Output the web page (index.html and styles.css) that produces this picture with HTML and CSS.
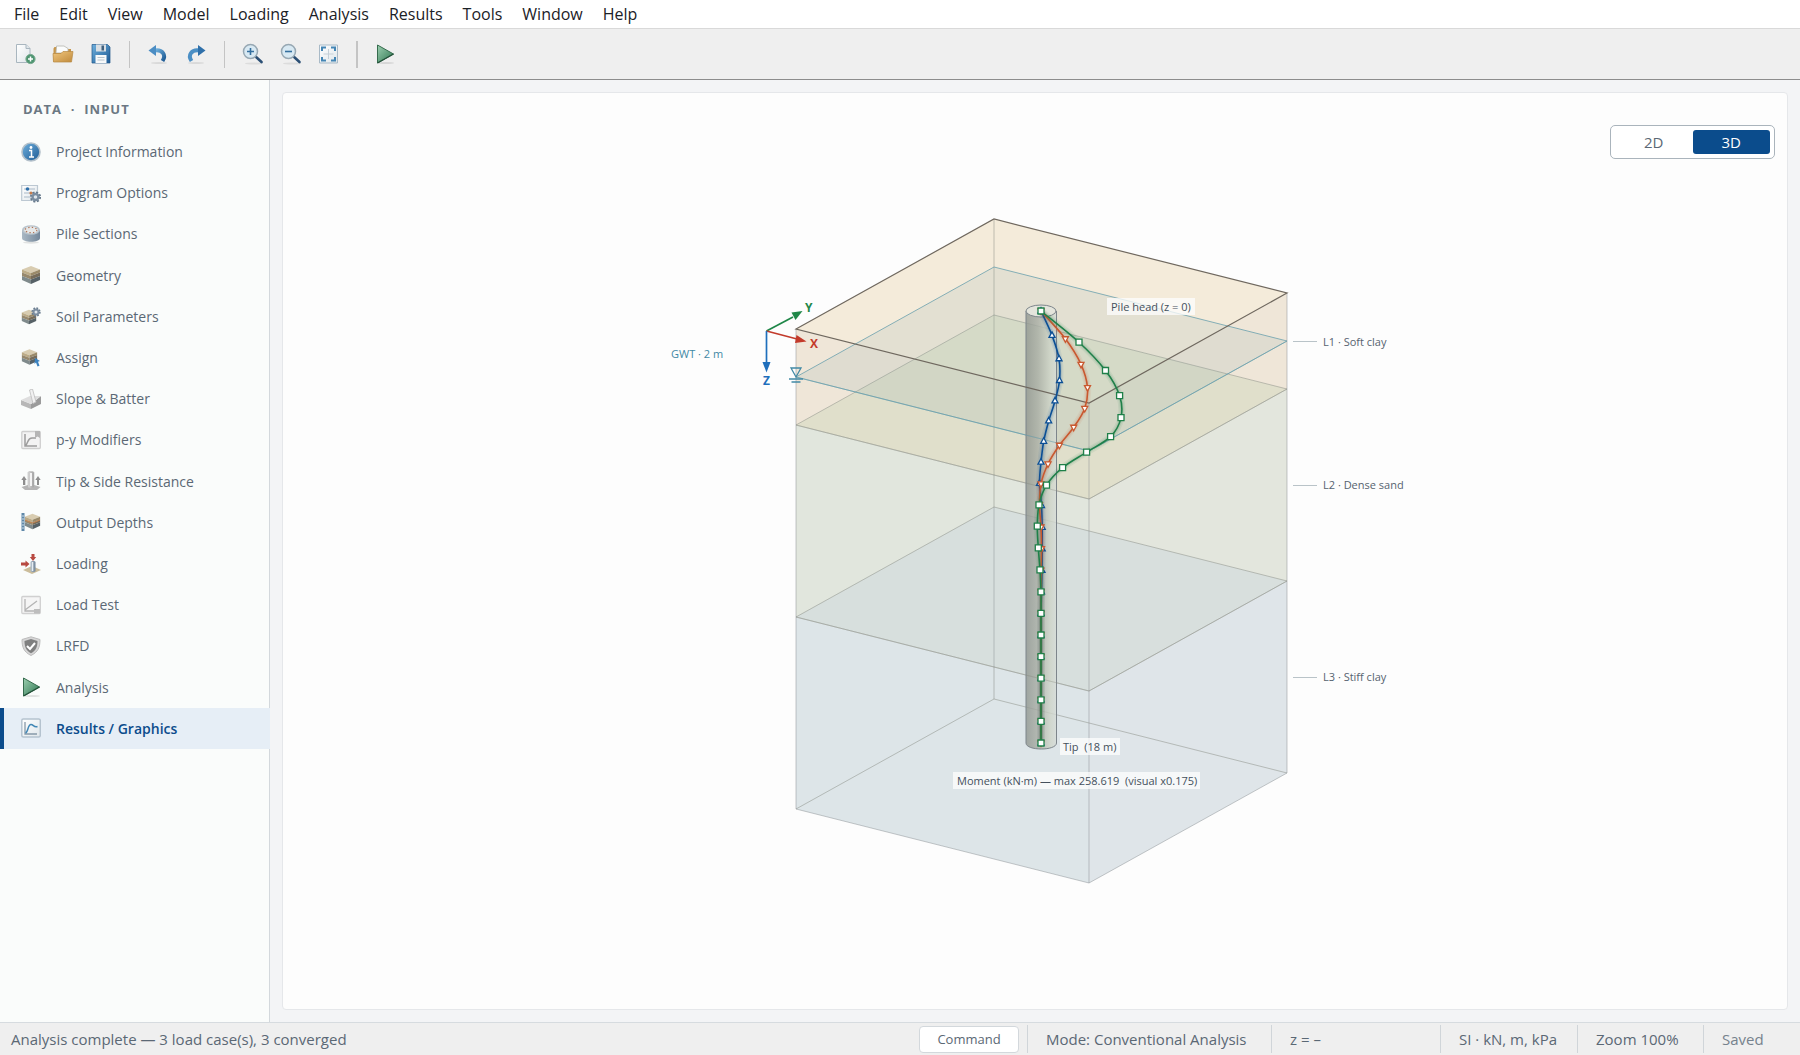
FILE: index.html
```html
<!DOCTYPE html>
<html lang="en">
<head>
<meta charset="utf-8">
<title>Pile Analysis</title>
<link rel="stylesheet" href="styles.css">
</head>
<body>
<svg class="defs" aria-hidden="true">
  <defs>
    <linearGradient id="blue" x1="0" y1="0" x2="1" y2="1"><stop offset="0" stop-color="#6fb0dd"/><stop offset="1" stop-color="#1d5a94"/></linearGradient>
    <linearGradient id="green" x1="0" y1="0" x2="1" y2="1"><stop offset="0" stop-color="#9ccfb0"/><stop offset="1" stop-color="#2d7550"/></linearGradient>
    <linearGradient id="gold" x1="0" y1="0" x2="1" y2="1"><stop offset="0" stop-color="#f0c67e"/><stop offset="1" stop-color="#c08a3c"/></linearGradient>
    <linearGradient id="paper" x1="0" y1="0" x2="1" y2="1"><stop offset="0" stop-color="#ffffff"/><stop offset="1" stop-color="#dfe6ea"/></linearGradient>
    <linearGradient id="steel" x1="0" y1="0" x2="1" y2="0"><stop offset="0" stop-color="#a9b8c4"/><stop offset="1" stop-color="#74879a"/></linearGradient>
    <linearGradient id="gray" x1="0" y1="0" x2="1" y2="0"><stop offset="0" stop-color="#dcdcdc"/><stop offset="1" stop-color="#9e9e9e"/></linearGradient>
    <symbol id="cube" viewBox="0 0 20 20">
      <path d="M10 1 19 4.500 10 8 1 4.500Z" fill="#d8ccb0"/>
      <path d="M1 4.500 10 8v3L1 7.500Z" fill="#bcab86"/><path d="M19 4.500 10 8v3l9-3.500Z" fill="#9a8a69"/>
      <path d="M1 7.500 10 11v3.500L1 11Z" fill="#97886c"/><path d="M19 7.500 10 11v3.500L19 11Z" fill="#776c59"/>
      <path d="M1 11l9 3.500V19L1 15Z" fill="#7f8a8b"/><path d="M19 11l-9 3.500V19l9-4Z" fill="#566166"/>
    </symbol>
    <symbol id="gear" viewBox="0 0 12 12">
      <circle cx="6" cy="6" r="4.600" fill="none" stroke="#66798b" stroke-width="2" stroke-dasharray="2 1.610"/>
      <circle cx="6" cy="6" r="3" fill="#dfe6ec" stroke="#7b8da0" stroke-width="2.400"/>
    </symbol>
    <symbol id="play" viewBox="0 0 20 20">
      <ellipse cx="11" cy="19" rx="8" ry="1" fill="#000" opacity=".1"/>
      <path d="M2.500 1 18.500 10 2.500 19Z" fill="url(#green)" stroke="#356b4d" stroke-width="1" stroke-linejoin="round"/>
      <path d="M2.500 19 18.500 10" stroke="#24523a" stroke-width="1.300"/>
    </symbol>
    <symbol id="lens" viewBox="0 0 22 22">
      <ellipse cx="12" cy="20.500" rx="9" ry="1" fill="#000" opacity=".08"/>
      <path d="m13 13 6.500 6" stroke="#2b4f75" stroke-width="2.600" stroke-linecap="round"/>
      <circle cx="8.500" cy="8.500" r="7" fill="#d8e9f3" stroke="#97a8b3" stroke-width="1.500"/>
    </symbol>
  </defs>
</svg>

<nav class="menubar" aria-label="Main menu">
  <button>File</button><button>Edit</button><button>View</button><button>Model</button><button>Loading</button><button>Analysis</button><button>Results</button><button>Tools</button><button>Window</button><button>Help</button>
</nav>

<div class="toolbar" role="toolbar" aria-label="Tools">
  <button aria-label="New"><svg viewBox="0 0 22 22"><path d="M2.500 1.500h9.500l4 4V19.500H2.500Z" fill="url(#paper)" stroke="#a9b6bf"/><path d="M12 1.500v4h4" fill="#dfe6ea" stroke="#a9b6bf"/><circle cx="16.500" cy="16" r="4.600" fill="#4d9470" stroke="#75a98d"/><path d="M16.500 13.500v5M14 16h5" stroke="#fff" stroke-width="1.500"/></svg></button>
  <button aria-label="Open"><svg viewBox="0 0 22 22"><path d="M1.500 19V5.500L2.500 4h5l1.500 2h10v4" fill="#c6954a"/><path d="m4 10 .500-7H12l4 2.500V10Z" fill="#fbfcfc" stroke="#b6b6b0" stroke-width=".8"/><path d="M1 10.500h8l2-2h10L19.500 19h-18Z" fill="url(#gold)" stroke="#b88a44" stroke-width=".7"/></svg></button>
  <button aria-label="Save"><svg viewBox="0 0 22 22"><path d="M2 1.500h15.500L20 4v16H2Z" fill="url(#blue)" stroke="#1f568b" stroke-width=".7"/><path d="M6 1.500h10v7H6Z" fill="#d8dee3"/><path d="M11.500 2.500H14v5h-2.500Z" fill="#3f5f7c"/><path d="M5.500 12h11v8h-11Z" fill="#f7f9fa"/><path d="M7.500 14.500h7M7.500 17h7" stroke="#b8c4cd"/></svg></button>
  <span class="rule"></span>
  <button aria-label="Undo"><svg viewBox="0 0 22 22"><ellipse cx="12" cy="20" rx="8" ry="1" fill="#000" opacity=".09"/><path d="M8 7.500C15.500 6.500 19.500 12 15.500 18" fill="none" stroke="url(#blue)" stroke-width="4"/><path d="M1.500 7.500 9 2v11Z" fill="#4b8dc4"/></svg></button>
  <button aria-label="Redo"><svg viewBox="0 0 22 22"><ellipse cx="11" cy="20" rx="8" ry="1" fill="#000" opacity=".09"/><path d="M14 7.500C6.500 6.500 2.500 12 6.500 18" fill="none" stroke="#4b8fc5" stroke-width="4"/><path d="M20.500 7.500 13 2v11Z" fill="#2f70aa"/></svg></button>
  <span class="rule"></span>
  <button aria-label="Zoom in"><svg viewBox="0 0 22 22"><use href="#lens"/><path d="M8.500 5v7M5 8.500h7" stroke="#346f9e" stroke-width="1.600"/></svg></button>
  <button aria-label="Zoom out"><svg viewBox="0 0 22 22"><use href="#lens"/><path d="M5 8.500h7" stroke="#346f9e" stroke-width="1.600"/></svg></button>
  <button aria-label="Zoom to fit"><svg viewBox="0 0 22 22"><path d="M1.500 2h18v18h-18Z" fill="url(#paper)" stroke="#a9bac7"/><path d="M10.500 6v10M5.500 11h10" stroke="#c5d0d8"/><path d="M4 8V4.500h4M13 4.500h4V8M17 14v3.500h-4M8 17.500H4V14" fill="none" stroke="#4486b5" stroke-width="2"/></svg></button>
  <span class="rule rule-bold"></span>
  <button aria-label="Run analysis"><svg viewBox="-1 -1 22 22"><use href="#play" width="20" height="20"/></svg></button>
</div>

<div class="workspace">
  <aside class="sidebar">
    <h2>DATA &nbsp;·&nbsp; INPUT</h2>
    <nav class="steps" aria-label="Data input">
      <a href="#info"><svg viewBox="0 0 20 20"><circle cx="10" cy="10" r="9" fill="url(#blue)" stroke="#b3c0ca" stroke-width="1.600"/><circle cx="10" cy="5.500" r="1.400" fill="#fff"/><path d="M8 8.500h2.500V15M8 15h5" fill="none" stroke="#fff" stroke-width="1.500"/></svg>Project Information</a>
      <a href="#options"><svg viewBox="0 0 20 20"><path d="M.7 2.500h15.800v15H.7Z" fill="url(#paper)" stroke="#bcc8d2" stroke-width="1.200"/><path d="M3 6h11M3 10h11M3 14h7" stroke="#a9bac7" stroke-width="1.200"/><circle cx="6.500" cy="6" r="1.800" fill="#2f70aa"/><circle cx="10" cy="10" r="1.600" fill="#c97c4a"/><use href="#gear" x="8.500" y="8" width="12" height="12"/></svg>Program Options</a>
      <a href="#sections"><svg viewBox="0 0 20 20"><ellipse cx="10" cy="18.500" rx="8" ry="1.200" fill="#000" opacity=".1"/><path d="M1 6v8c0 5 18 5 18 0V6Z" fill="url(#steel)"/><ellipse cx="10" cy="6" rx="9" ry="4.800" fill="#b9c4cc"/><ellipse cx="10" cy="6" rx="7" ry="3.500" fill="#e6e8e8"/><ellipse cx="10" cy="6" rx="5.800" ry="2.700" fill="none" stroke="#b0755a" stroke-width="1.200" stroke-dasharray="1.300 2.200"/></svg>Pile Sections</a>
      <a href="#geometry"><svg viewBox="0 0 20 20"><use href="#cube"/></svg>Geometry</a>
      <a href="#soil"><svg viewBox="0 0 20 20"><use href="#cube" x="0" y="3" width="16" height="16"/><use href="#gear" x="10" y="1" width="10" height="10"/></svg>Soil Parameters</a>
      <a href="#assign"><svg viewBox="0 0 20 20"><use href="#cube" x="0" y="0" width="17" height="18"/><path d="m14 10 5 3-2 .7 1.500 4-2 .8-1.500-4-1.500 1.500Z" fill="#3b82bf"/></svg>Assign</a>
      <a href="#slope"><svg viewBox="0 0 20 20"><path d="M0 11 10 15v5L0 16Z" fill="#b7b7b7"/><path d="m20 7-10 8v5l10-5Z" fill="#9b9b9b"/><path d="m0 11 9-4 11 0-10 8Z" fill="#dedede"/><path d="m8.500 1 3-1 3.500 13-3 1.500Z" fill="#f1f1f1" stroke="#bdbdbd" stroke-width=".8"/></svg>Slope &amp; Batter</a>
      <a href="#py"><svg viewBox="0 0 20 20"><rect x=".8" y="1.500" width="18.500" height="17" rx="1" fill="#f3f3f3" stroke="#cfcfcf" stroke-width="1.300"/><path d="M4 4v12h12M4 16C8 13 6 8 11 8h4" fill="none" stroke="#9d9d9d" stroke-width="1.500"/><path d="M14 1h5v7l-2.500-1.500L14 8Z" fill="#b5b5b5"/></svg>p-y Modifiers</a>
      <a href="#tip"><svg viewBox="0 0 20 20"><path d="M.5 16 10 13l9.500 3-3.500 3H4Z" fill="#b5b5b5"/><path d="M7 1.500c0-1.500 6-1.500 6 0V16c0 1.500-6 1.500-6 0Z" fill="url(#gray)" stroke="#bbb" stroke-width=".6"/><path d="M10 2v13" stroke="#f4f4f4" stroke-width="2"/><path d="M2 14V9H.3L3 5l2.700 4H4.300v5M16 14V9h-1.700L17 5l2.700 4H18v5" fill="#8e8e8e"/></svg>Tip &amp; Side Resistance</a>
      <a href="#depths"><svg viewBox="0 0 20 20"><use href="#cube" x="3" y="0" width="17" height="19"/><path d="m4 8 7.500 3L19 8" fill="none" stroke="#c98752"/><path d="M2 1v18" stroke="#5f88a8" stroke-width="3"/><path d="M1 4h2M1 7h2M1 10h2M1 13h2M1 16h2" stroke="#cfdde7"/></svg>Output Depths</a>
      <a href="#loading"><svg viewBox="0 0 20 20"><path d="m2 16 9-4 9 4-9 4Z" fill="#cbbd9b"/><path d="M9.500 8c0-1.500 5-1.500 5 0v9c0 1.500-5 1.500-5 0Z" fill="url(#steel)"/><path d="M11.500 8v9" stroke="#e7edf2" stroke-width="1.500"/><path d="M10.500 0h3v3h1.700L12 7 8.800 3h1.700ZM0 8.500h4.500V6.500L8.500 10l-4 3.500v-2H0Z" fill="#b84a42"/></svg>Loading</a>
      <a href="#loadtest"><svg viewBox="0 0 20 20"><rect x=".8" y="1.500" width="18.500" height="17" rx="1" fill="#f5f5f5" stroke="#d0d0d0" stroke-width="1.300"/><path d="M4 4v12h10M4 15 16 6" fill="none" stroke="#b4b4b4" stroke-width="1.300"/><rect x="13" y="14" width="6" height="4.500" fill="#bdbdbd"/></svg>Load Test</a>
      <a href="#lrfd"><svg viewBox="0 0 20 20"><path d="M10 .8 19 3.500c0 8-2 12.500-9 16-7-3.500-9-8-9-16Z" fill="#d6d6d6" stroke="#bcbcbc"/><path d="m10 3 6.500 2c0 6-1.500 9.500-6.500 12.200C5 14.500 3.500 11 3.500 5Z" fill="#7f8080"/><path d="m6 10 3 3 5-6" fill="none" stroke="#fff" stroke-width="2"/></svg>LRFD</a>
      <a href="#analysis"><svg viewBox="0 0 20 20"><use href="#play"/></svg>Analysis</a>
      <a href="#results" class="active" aria-current="page"><svg viewBox="0 0 20 20"><rect x=".8" y="1" width="18.500" height="18" rx="1.500" fill="url(#paper)" stroke="#b5c3cf" stroke-width="1.500"/><path d="M4 4v12h12" fill="none" stroke="#8799a8" stroke-width="1.300"/><path d="M4.500 15C7.500 14 6.500 6.500 10 6.500c2.500 0 3 3.500 6.500 2" fill="none" stroke="#4187b5" stroke-width="1.500"/></svg>Results / Graphics</a>
    </nav>
  </aside>

  <main class="canvas">
    <div class="viewswitch" role="group" aria-label="View mode">
      <button aria-pressed="false">2D</button><button aria-pressed="true" class="on">3D</button>
    </div>
    <svg class="scene" viewBox="283 93 1504 916" role="img" aria-label="Soil block and pile, 3D moment diagram">
      <defs>
        <linearGradient id="pile" x1="0" x2="1" y1="0" y2="0">
          <stop offset="0" stop-color="#8f958f" stop-opacity=".8"/><stop offset=".4" stop-color="#a9aea5" stop-opacity=".8"/>
          <stop offset=".8" stop-color="#ced4c8" stop-opacity=".8"/><stop offset="1" stop-color="#d6dcd8" stop-opacity=".8"/>
        </linearGradient>
      </defs>
      <!-- soil layers: visible side faces, top surface, then the planes between layers -->
      <path d="M796 617 1089 691V883L796 809Z" fill="#dde5e8"/>
      <path d="M1089 691 1287 581V773L1089 883Z" fill="#dfe5e9"/>
      <path d="M796 425 1089 499V691L796 617Z" fill="#e1e6dd"/>
      <path d="M1089 499 1287 389V581L1089 691Z" fill="#e3e6dd"/>
      <path d="M796 329 994 219 1287 293V389L1089 499 796 425Z" fill="#efe6d8"/>
      <path d="M796 329 994 219 1287 293 1089 403Z" fill="#f4ebda"/>
      <g stroke="#8a8d85" stroke-opacity=".5">
        <path d="M796 809 994 699 1287 773" fill="none"/>
        <path d="M994 219V699" fill="none"/>
        <path d="M796 617 994 507 1287 581 1089 691Z" fill="#afc3e1" fill-opacity=".2"/>
        <path d="M796 425 994 315 1287 389 1089 499Z" fill="#aec8a0" fill-opacity=".22"/>
      </g>
      <path d="M796 377 994 267 1287 341 1089 451Z" fill="#83a5a5" fill-opacity=".14" stroke="#6aa0ae" stroke-opacity=".8"/>
      <!-- pile -->
      <path d="M1026 311V743C1026 751 1056.500 751 1056.500 743V311Z" fill="url(#pile)"/>
      <path d="M1026 311V743C1026 751 1056.500 751 1056.500 743V311" fill="none" stroke="#7d858b" stroke-width="1"/>
      <ellipse cx="1041" cy="311" rx="15" ry="6" fill="#e4e5dc" stroke="#7d858b"/>
      <!-- outer edges -->
      <path d="M796 329V809L1089 883 1287 773V293M1089 403V883" fill="none" stroke="#8c9296" stroke-opacity=".5"/>
      <path d="M796 617 1089 691 1287 581M796 425 1089 499 1287 389" fill="none" stroke="#8a8d85" stroke-opacity=".3"/>
      <path d="M796 377 1089 451 1287 341" fill="none" stroke="#6aa0ae" stroke-opacity=".5"/>
      <path d="M796 329 994 219 1287 293 1089 403Z" fill="none" stroke="#6f685f" stroke-width="1.200"/>
      <g id="curves"></g>
      <!-- groundwater mark -->
      <path d="M791 368h10l-5 9ZM789 379h14M791.500 382h9" fill="none" stroke="#4289a5" stroke-width="1.300"/>
      <!-- axes -->
      <g fill="none" stroke-width="1.700">
        <path d="M766.500 331 793 317" stroke="#1f8748"/><path d="M766.500 331 797 339" stroke="#c33a2b"/><path d="M766.500 331V363" stroke="#1f6fbc"/>
      </g>
      <path d="M802.500 311 791.500 312.500l4 7.500Z" fill="#1f8748"/>
      <path d="M806.500 341.500 796.500 335l-1.500 8Z" fill="#c33a2b"/>
      <path d="M766.500 372.500l-4-10.500h8Z" fill="#1f6fbc"/>
      <g class="axis">
        <text x="805" y="312" fill="#1f8748">Y</text><text x="810" y="348" fill="#c33a2b">X</text><text x="763" y="385" fill="#1f6fbc">Z</text>
      </g>
      <g stroke="#b9c3c8"><path d="M1293 341.500h24M1293 485.500h24M1293 677.500h24"/></g>
      <g fill="#fdfdfd" fill-opacity=".75">
        <rect x="1107" y="298" width="88" height="17"/><rect x="1060" y="738" width="60" height="17"/><rect x="953" y="772" width="247" height="17"/>
      </g>
      <g class="label">
        <text x="1111" y="311">Pile head (z = 0)</text>
        <text x="1063" y="751" xml:space="preserve">Tip  (18 m)</text>
        <text x="957" y="785" xml:space="preserve">Moment (kN·m) — max 258.619  (visual x0.175)</text>
        <text class="layer" x="1323" y="346">L1 · Soft clay</text><text class="layer" x="1323" y="489">L2 · Dense sand</text><text class="layer" x="1323" y="681">L3 · Stiff clay</text>
        <text class="water" x="671" y="358">GWT · 2 m</text>
      </g>
    </svg>
  </main>
</div>

<footer class="statusbar">
  <span class="message">Analysis complete — 3 load case(s), 3 converged</span>
  <button>Command</button>
  <span class="cell mode">Mode: Conventional Analysis</span>
  <span class="cell depth">z = –</span>
  <span class="cell units">SI · kN, m, kPa</span>
  <span class="cell zoom">Zoom 100%</span>
  <span class="cell saved">Saved</span>
</footer>
<script src="curves.js"></script>
</body>
</html>
```
FILE: curves.js
```js
// Moment diagrams, one value every 0.9 m from the pile head, as offsets along the X axis.
const HEAD = { x: 1041, y: 311 };
const STEP = 21.6;
const SLOPE = 0.253;
const cases = [
  { color: '#0b4f95', width: 1.6, mark: 'up', values: [0, 11, 18, 18.5, 14, 7.7, 2.7, 0, -1.5, 0.5, 1.2, 1.2, 1, 0.5] },
  { color: '#c9582f', width: 1.6, mark: 'down', values: [0, 24.4, 40, 46.5, 43.7, 32.7, 18.4, 7, 0, -1.5, 0, 0.5, 0] },
  { color: '#1f8049', width: 1.6, mark: 'square', values: [0, 38, 64.5, 78.6, 80, 69.6, 45.6, 21.6, 5.5, -2, -3.7, -2.7, -1] }
];
const marks = {
  up: 'm0-3.500 3 5.500h-6Z',
  down: 'm0 3.500 3-5.500h-6Z',
  square: 'm-3-3h6v6h-6Z'
};
const group = document.getElementById('curves');

function add(d, attrs) {
  const path = document.createElementNS('http://www.w3.org/2000/svg', 'path');
  path.setAttribute('d', d);
  for (const name in attrs) path.setAttribute(name, attrs[name]);
  group.appendChild(path);
}

for (const c of cases) {
  const points = [];
  for (let i = 0; i <= 20; i++) {
    const v = c.values[i] || 0;
    points.push([HEAD.x + v, HEAD.y + i * STEP + v * SLOPE]);
  }
  let d = `M${points[0]}`;
  for (let i = 0; i < 20; i++) {
    const a = points[Math.max(i - 1, 0)], b = points[i], e = points[i + 1], f = points[Math.min(i + 2, 20)];
    d += `C${b[0] + (e[0] - a[0]) / 6} ${b[1] + (e[1] - a[1]) / 6} ${e[0] - (f[0] - b[0]) / 6} ${e[1] - (f[1] - b[1]) / 6} ${e}`;
  }
  add(d, { fill: 'none', stroke: c.color, 'stroke-width': 7, 'stroke-opacity': 0.08 });
  add(d, { fill: 'none', stroke: c.color, 'stroke-width': 4, 'stroke-opacity': 0.12 });
  add(d, { fill: 'none', stroke: c.color, 'stroke-width': c.width });
  for (const p of points) add(`M${p}${marks[c.mark]}`, { fill: '#fff', stroke: c.color, 'stroke-width': 1.3 });
}
```
FILE: styles.css
```css
* { box-sizing: border-box; }
html, body { height: 100%; }
body {
  margin: 0;
  display: flex;
  flex-direction: column;
  background: #f3f4f6;
  color: #5b6875;
  font-family: "Open Sans", "Noto Sans", sans-serif;
  font-size: 14px;
}
button { font: inherit; color: inherit; border: 0; padding: 0; background: none; }
.defs { position: absolute; width: 0; height: 0; }

.menubar {
  display: flex;
  gap: 20px;
  height: 29px;
  padding: 0 14px;
  background: #fff;
  border-bottom: 1px solid #d9d9d9;
  color: #1b2126;
  font-size: 16px;
}
.menubar button { height: 28px; }

.toolbar {
  display: flex;
  align-items: center;
  height: 51px;
  padding-left: 6px;
  background: #efefef;
  border-bottom: 1px solid #8c8c8c;
}
.toolbar button { width: 38px; height: 38px; display: grid; place-items: center; }
.toolbar svg { width: 22px; height: 22px; }
.rule { width: 1px; height: 27px; margin: 0 9px; background: #c4c4c4; }
.rule-bold { width: 2px; margin: 0 8px; }

.workspace { flex: 1; min-height: 0; display: flex; }
.sidebar { width: 270px; background: #fafcfb; border-right: 1px solid #d3d8dc; }
.sidebar h2 {
  margin: 0;
  padding: 18px 0 0 23px;
  height: 51px;
  font-size: 13px;
  line-height: 22px;
  font-weight: 700;
  letter-spacing: 1px;
  color: #6b7883;
}
.steps { display: grid; grid-auto-rows: 1fr; height: 618px; }
.steps a {
  display: flex;
  align-items: center;
  gap: 15px;
  padding-left: 21px;
  color: inherit;
  text-decoration: none;
}
.steps svg { width: 20px; height: 20px; }
.steps .active {
  margin-right: -1px;
  padding-left: 17px;
  border-left: 4px solid #0b4c8c;
  background: #e6eef6;
  color: #0b4c8c;
  font-weight: 600;
}

.canvas {
  position: relative;
  flex: 1;
  min-width: 0;
  margin: 12px;
  background: #fdfdfd;
  border: 1px solid #e5e7ea;
  border-radius: 4px;
}
.scene { display: block; width: 100%; height: 100%; }
.viewswitch {
  position: absolute;
  top: 32px;
  right: 12px;
  display: flex;
  width: 165px;
  height: 34px;
  padding: 4px;
  background: #fff;
  border: 1px solid #aab4bc;
  border-radius: 5px;
  font-size: 15px;
}
.viewswitch button { flex: 1; border-radius: 3px; }
.viewswitch .on { background: #0b4c8c; color: #fff; }

.label { font-size: 11px; fill: #44505c; }
.layer { fill: #566370; }
.water { fill: #4289a5; }
.axis { font-size: 12px; font-weight: 700; }

.statusbar {
  display: flex;
  align-items: center;
  height: 33px;
  padding-left: 11px;
  background: #efefef;
  border-top: 1px solid #d6dbdf;
  font-size: 15px;
}
.message { flex: 1; }
.statusbar button {
  width: 100px;
  height: 27px;
  margin-right: 8px;
  background: #fff;
  border: 1px solid #d3d8dc;
  border-radius: 4px;
  font-size: 13px;
}
.cell { height: 28px; padding-left: 18px; line-height: 28px; border-left: 1px solid #d0d5d9; white-space: nowrap; }
.mode { width: 244px; }
.depth { width: 169px; }
.units { width: 137px; }
.zoom { width: 126px; }
.saved { width: 97px; color: #76828d; }
```
